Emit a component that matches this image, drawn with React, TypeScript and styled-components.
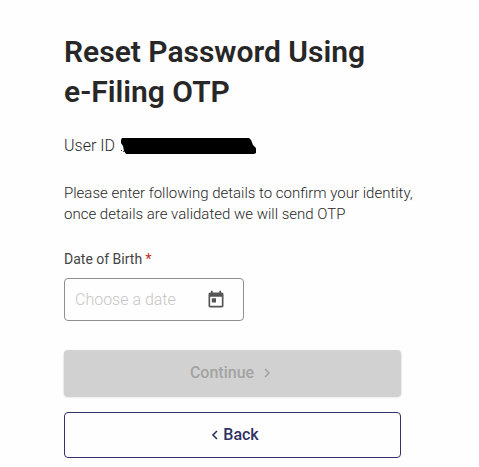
import React from "react";
import styled, { createGlobalStyle } from "styled-components";

const GlobalStyle = createGlobalStyle`
  *, *::before, *::after { box-sizing: border-box; }
  body {
    margin: 0;
    background: #fefefe;
    color: #272727;
    font-family: Roboto, "Liberation Sans", sans-serif;
  }
`;

const Page = styled.main`
  padding: 32px 64px 8px;
`;

const Title = styled.h1`
  margin: 0;
  max-width: 320px;
  font-size: 30px;
  line-height: 40px;
  font-weight: 600;
`;

const UserRow = styled.div`
  display: flex;
  align-items: center;
  gap: 4px;
  margin-top: 24px;
  font-size: 16px;
  line-height: 20px;
  font-weight: 300;
`;

const Intro = styled.p`
  margin: 27px 0 0;
  width: max-content;
  font-size: 15px;
  line-height: 21px;
  font-weight: 300;
`;

const Form = styled.form`
  display: flex;
  flex-direction: column;
  max-width: 337px;
  margin-top: 24px;
`;

const Label = styled.label`
  color: #444;
  font-size: 14px;
  line-height: 20px;
  font-weight: 400;
`;

const Required = styled.span`
  color: #c62828;
`;

const DateField = styled.div`
  display: flex;
  align-items: center;
  width: 180px;
  height: 43px;
  margin: 9px 0 29px;
  padding: 0 17px 0 10px;
  border: 1px solid #8f8f8f;
  border-radius: 4px;
`;

const DateInput = styled.input`
  flex: 1;
  min-width: 0;
  padding: 0;
  border: 0;
  outline: 0;
  background: transparent;
  color: #272727;
  font: 300 16px/24px Roboto, "Liberation Sans", sans-serif;

  &::placeholder {
    color: #c6c6c6;
    opacity: 1;
  }
`;

const IconButton = styled.button`
  display: flex;
  padding: 0;
  border: 0;
  background: transparent;
  color: #555;
`;

const ActionButton = styled.button<{ $primary?: boolean }>`
  display: flex;
  align-items: center;
  justify-content: center;
  gap: ${(p) => (p.$primary ? 8 : 4)}px;
  height: 46px;
  margin-bottom: 16px;
  padding: ${(p) => (p.$primary ? "0 8px 0 4px" : "0 4px 0 8px")};
  border: ${(p) => (p.$primary ? "0" : "1px solid #33336b")};
  border-radius: 4px;
  background: ${(p) => (p.$primary ? "#d1d1d1" : "#fefefe")};
  box-shadow: ${(p) => (p.$primary ? "0 1px 2px rgba(0, 0, 0, 0.24)" : "none")};
  color: ${(p) => (p.$primary ? "#a3a3a3" : "#2d3160")};
  font: 500 16px/24px Roboto, "Liberation Sans", sans-serif;
`;

function RedactedId() {
  return (
    <svg width="137" height="18" viewBox="0 0 137 18" role="img" aria-label="Hidden user ID">
      <path d="M3 1H130L132 3L134 8L137 11V16L135 17H7L5 14L4 9L2 6V3Z" fill="#000" />
      <path d="M2 13h1v1h-1zM4 14h1v1h-1z" fill="#333" />
    </svg>
  );
}

function CalendarIcon() {
  return (
    <svg width="20" height="20" viewBox="0 0 24 24" fill="currentColor" aria-hidden="true">
      <path d="M19 3h-1V1h-2v2H8V1H6v2H5C3.9 3 3 3.9 3 5v14c0 1.1.9 2 2 2h14c1.1 0 2-.9 2-2V5c0-1.1-.9-2-2-2zm0 16H5V8h14v11zM7 10h5v5H7z" />
    </svg>
  );
}

function Chevron({ left = false }: { left?: boolean }) {
  return (
    <svg width="9" height="10" viewBox="0 0 9 10" fill="none" stroke="currentColor" strokeWidth="1.6" aria-hidden="true">
      <path d={left ? "M7 1L3 5L7 9" : "M3 1L7 5L3 9"} />
    </svg>
  );
}

export default function App() {
  return (
    <>
      <GlobalStyle />
      <Page>
        <Title>Reset Password Using e-Filing OTP</Title>
        <UserRow>
          <span>User ID</span>
          <RedactedId />
        </UserRow>
        <Intro>
          Please enter following details to confirm your identity,
          <br />
          once details are validated we will send OTP
        </Intro>
        <Form onSubmit={(e) => e.preventDefault()}>
          <Label htmlFor="dob">
            Date of Birth <Required>*</Required>
          </Label>
          <DateField>
            <DateInput id="dob" type="text" placeholder="Choose a date" required />
            <IconButton type="button" aria-label="Open calendar">
              <CalendarIcon />
            </IconButton>
          </DateField>
          <ActionButton $primary type="submit" disabled>
            Continue
            <Chevron />
          </ActionButton>
          <ActionButton type="button">
            <Chevron left />
            Back
          </ActionButton>
        </Form>
      </Page>
    </>
  );
}
